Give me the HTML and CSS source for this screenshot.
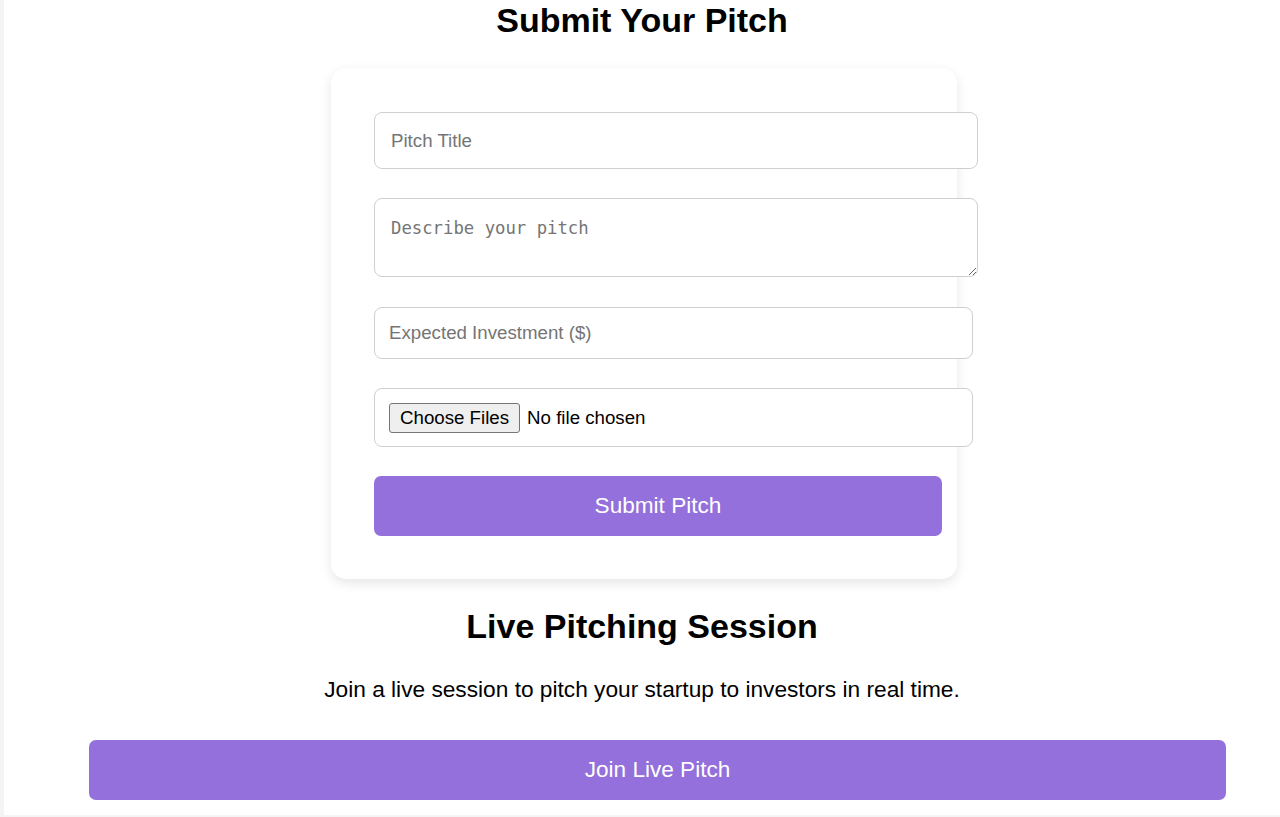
FILE: index.html
```html
<!DOCTYPE html>
<html lang="en">
<head>
<meta charset="utf-8">
<title>Submit Your Pitch</title>
<link rel="stylesheet" href="styles.css">
</head>
<body>
<main class="page">
  <h2 class="title">Submit Your Pitch</h2>
  <form class="card">
    <input class="field field-title" type="text" placeholder="Pitch Title">
    <textarea class="field field-desc" placeholder="Describe your pitch"></textarea>
    <input class="field field-invest" type="number" placeholder="Expected Investment ($)">
    <input class="field field-file" type="file" multiple>
    <button class="btn btn-submit" type="button">Submit Pitch</button>
  </form>
  <h2 class="title title-live">Live Pitching Session</h2>
  <p class="lead">Join a live session to pitch your startup to investors in real time.</p>
  <button class="btn btn-join" type="button">Join Live Pitch</button>
</main>
</body>
</html>
```
FILE: styles.css
```css
html, body {
  margin: 0;
  padding: 0;
}
body {
  background: #f4f4f4;
  font-family: "Liberation Sans", Arial, sans-serif;
  color: #000;
}
.page {
  margin-left: 4px;
  background: #fff;
  padding: 1px 0 15px;
  display: flex;
  flex-direction: column;
}
.title {
  margin: 0;
  font-size: 34px;
  line-height: 38px;
  font-weight: 700;
  text-align: center;
}
.card {
  box-sizing: border-box;
  width: 626px;
  margin: 29px 0 0 327px;
  padding: 44px 43px 43px;
  background: #fff;
  border-radius: 15px;
  box-shadow: 0 4px 12px rgba(0, 0, 0, 0.1);
  display: flex;
  flex-direction: column;
  gap: 29.3px;
}
.field {
  box-sizing: border-box;
  margin: 0;
  border: 1px solid #cfcfcf;
  border-radius: 8px;
  background: #fff;
  font-family: "Liberation Sans", Arial, sans-serif;
  font-size: 18.7px;
  color: #000;
  outline: none;
}
.field::placeholder {
  color: #757575;
}
.field-title {
  width: 604px;
  height: 57px;
  padding: 0 16px;
}
.field-desc {
  width: 604px;
  height: 79px;
  padding: 19px 16px 10px;
  font-family: "DejaVu Sans Mono", "Liberation Mono", monospace;
  font-size: 17.3px;
  resize: vertical;
}
.field-invest {
  width: 599px;
  height: 52px;
  padding: 0 14px;
}
.field-file {
  width: 599px;
  height: 59px;
  padding: 14px 14px 0;
}
.field-file::file-selector-button {
  font-family: "Liberation Sans", Arial, sans-serif;
  font-size: 18.7px;
  padding: 3px 10px;
  margin-right: 7px;
  border: 1px solid #767676;
  border-radius: 3px;
  background: #efefef;
  color: #000;
}
.btn {
  box-sizing: border-box;
  border: none;
  border-radius: 7px;
  background: #9370db;
  color: #fff;
  font-family: "Liberation Sans", Arial, sans-serif;
  font-size: 22.6px;
  cursor: pointer;
}
.btn-submit {
  width: 568px;
  height: 60px;
}
.title-live {
  margin-top: 28px;
}
.lead {
  margin: 31px 0 0;
  font-size: 22.7px;
  line-height: 26px;
  text-align: center;
}
.btn-join {
  width: 1137px;
  height: 60px;
  margin: 38px 0 0 85px;
}
```
